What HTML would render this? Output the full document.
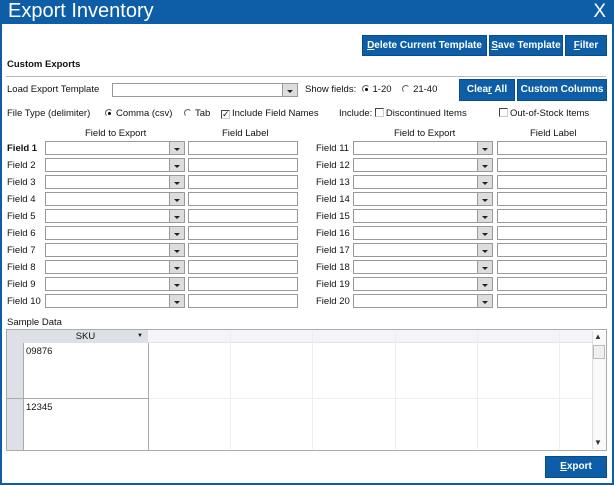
<!DOCTYPE html>
<html><head><style>
*{box-sizing:border-box;margin:0;padding:0}
body{width:614px;height:485px;background:#fff;font-family:"Liberation Sans",Arial,sans-serif;font-size:9.5px;color:#111;position:relative;overflow:hidden}
.frame{position:absolute;left:0;top:0;width:614px;height:485px;border:2px solid #0d5ea6;border-top:none}
.title{position:absolute;left:0;top:0;width:614px;height:24px;background:#0d5ea6;color:#fff;font-size:20px;padding-left:8px;line-height:23px}
.x{position:absolute;right:8px;top:0;font-size:19px}
.a{position:absolute;white-space:nowrap}
.btn{position:absolute;background:#0d5ea6;color:#fff;font-weight:bold;font-size:10px;text-align:center;border:1px solid #084c8a}
.dd{position:absolute;height:14px;border:1px solid #999;background:#fff;width:140px}
.dd::after{content:"";position:absolute;right:0;top:0;width:14px;height:12px;background:#ddd;border-left:1px solid #999}
.dd i{position:absolute;right:4px;top:6px;border:3px solid transparent;border-top:3px solid #222;z-index:2}
.tb{position:absolute;height:14px;border:1px solid #999;background:#fff;width:110px}
.rad{display:inline-block;width:8px;height:8px;border-radius:50%;border:1px solid #666;border-right-color:#fff;border-bottom-color:#fff;vertical-align:-1px;margin-right:3px;position:relative}
.rad.on::after{content:"";position:absolute;left:2px;top:2px;width:3px;height:3px;background:#000;border-radius:50%}
.cb{display:inline-block;width:9px;height:9px;border:1px solid #444;border-right-color:#ccc;border-bottom-color:#ccc;vertical-align:-1px;margin-right:2px;font-size:9px;line-height:7px}
.vl{position:absolute;width:1px;background:#eee;top:331px;height:118px}
</style></head><body>
<div class="title">Export Inventory<span class="x">X</span></div>
<div class="frame"></div>
<div class="btn" style="left:362px;top:35px;width:125px;height:21px;line-height:19px"><u>D</u>elete Current Template</div>
<div class="btn" style="left:489px;top:35px;width:74px;height:21px;line-height:19px"><u>S</u>ave Template</div>
<div class="btn" style="left:565px;top:35px;width:42px;height:21px;line-height:19px"><u>F</u>ilter</div>
<div class="a" style="left:7px;top:59px;font-weight:bold">Custom Exports</div>
<div class="a" style="left:6px;top:76px;width:600px;height:1px;background:#bbb"></div>
<div class="a" style="left:7px;top:84px">Load Export Template</div>
<div class="dd" style="left:112px;top:83px;width:186px"><i></i></div>
<div class="a" style="left:305px;top:84px">Show fields: &nbsp;<span class="rad on"></span>1-20 &nbsp;&nbsp; <span class="rad"></span>21-40</div>
<div class="btn" style="left:459px;top:79px;width:56px;height:22px;line-height:20px">Clea<u>r</u> All</div>
<div class="btn" style="left:517px;top:79px;width:90px;height:22px;line-height:20px">Custom Columns</div>
<div class="a" style="left:7px;top:108px">File Type (delimiter)</div>
<div class="a" style="left:105px;top:108px"><span class="rad on"></span>Comma (csv)</div>
<div class="a" style="left:184px;top:108px"><span class="rad"></span>Tab</div>
<div class="a" style="left:221px;top:108px"><span class="cb">✓</span>Include Field Names</div>
<div class="a" style="left:339px;top:108px">Include: <span class="cb"></span>Discontinued Items</div>
<div class="a" style="left:499px;top:108px"><span class="cb"></span>Out-of-Stock Items</div>
<div class="a" style="left:85px;top:128px">Field to Export</div>
<div class="a" style="left:222px;top:128px">Field Label</div>
<div class="a" style="left:394px;top:128px">Field to Export</div>
<div class="a" style="left:530px;top:128px">Field Label</div>
<div id="rows"></div>
<script>
var h='';for(var i=0;i<10;i++){var y=141+i*17;
h+='<div class="a" style="left:7px;top:'+(y+2)+'px;'+(i==0?'font-weight:bold':'')+'">Field '+(i+1)+'</div>';
h+='<div class="dd" style="left:45px;top:'+y+'px"><i></i></div><div class="tb" style="left:188px;top:'+y+'px"></div>';
h+='<div class="a" style="left:316px;top:'+(y+2)+'px">Field '+(i+11)+'</div>';
h+='<div class="dd" style="left:353px;top:'+y+'px"><i></i></div><div class="tb" style="left:497px;top:'+y+'px"></div>';}
document.getElementById('rows').innerHTML=h;
</script>
<div class="a" style="left:7px;top:317px">Sample Data</div>
<div class="a" style="left:6px;top:329px;width:601px;height:122px;border:1px solid #aaa;background:#fff"></div>
<div class="a" style="left:7px;top:330px;width:585px;height:13px;background:#f4f4fa;border-bottom:1px solid #e4e4ee"></div>
<div class="a" style="left:7px;top:330px;width:16px;height:120px;background:#dde0e6"></div>
<div class="a" style="left:23px;top:330px;width:125px;height:13px;background:#dde0e6;text-align:center;line-height:13px">SKU<span style="position:absolute;right:5px;font-size:6px">▼</span></div>
<div class="a" style="left:23px;top:343px;width:126px;height:107px;border-right:1px solid #aaa;border-left:1px solid #aaa"></div>
<div class="a" style="left:7px;top:398px;width:142px;height:1px;background:#aaa"></div>
<div class="a" style="left:149px;top:398px;width:443px;height:1px;background:#eee"></div>
<div class="a" style="left:26px;top:346px">09876</div>
<div class="a" style="left:26px;top:402px">12345</div>
<div class="vl" style="left:230px"></div><div class="vl" style="left:312px"></div><div class="vl" style="left:395px"></div><div class="vl" style="left:477px"></div><div class="vl" style="left:559px"></div>
<div class="a" style="left:592px;top:331px;width:14px;height:118px;background:#fafafa;border-left:1px solid #ddd"></div>
<div class="a" style="left:594px;top:332px;font-size:8px;color:#334">▲</div>
<div class="a" style="left:593px;top:345px;width:12px;height:14px;border:1px solid #bbb;background:#f0f0f0"></div>
<div class="a" style="left:594px;top:438px;font-size:8px;color:#334">▼</div>
<div class="btn" style="left:545px;top:456px;width:62px;height:22px;line-height:20px"><u>E</u>xport</div>
</body></html>
